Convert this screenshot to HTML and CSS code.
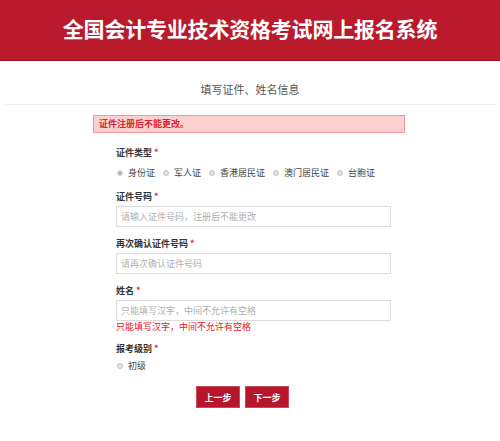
FILE: index.html
```html
<!DOCTYPE html>
<html lang="zh-CN">
<head>
<meta charset="utf-8">
<title>全国会计专业技术资格考试网上报名系统</title>
<link rel="stylesheet" href="styles.css">
</head>
<body>
<header class="header">
  <h1 class="title">全国会计专业技术资格考试网上报名系统</h1>
</header>
<div class="subtitle">填写证件、姓名信息</div>
<main class="form">
  <div class="alert">证件注册后不能更改。</div>
  <div class="fields">
    <div class="field first">
      <div class="label">证件类型 <span class="req">*</span></div>
      <div class="radios">
        <label class="radio-item"><span class="radio checked"></span>身份证</label>
        <label class="radio-item"><span class="radio"></span>军人证</label>
        <label class="radio-item"><span class="radio"></span>香港居民证</label>
        <label class="radio-item"><span class="radio"></span>澳门居民证</label>
        <label class="radio-item"><span class="radio"></span>台胞证</label>
      </div>
    </div>
    <div class="field">
      <div class="label">证件号码 <span class="req">*</span></div>
      <input class="input" type="text" placeholder="请输入证件号码，注册后不能更改">
    </div>
    <div class="field">
      <div class="label">再次确认证件号码 <span class="req">*</span></div>
      <input class="input" type="text" placeholder="请再次确认证件号码">
    </div>
    <div class="field">
      <div class="label">姓名 <span class="req">*</span></div>
      <input class="input" type="text" placeholder="只能填写汉字，中间不允许有空格">
      <div class="error">只能填写汉字，中间不允许有空格</div>
    </div>
    <div class="field">
      <div class="label">报考级别 <span class="req">*</span></div>
      <div class="radios level">
        <label class="radio-item"><span class="radio"></span>初级</label>
      </div>
    </div>
  </div>
  <div class="actions">
    <button class="btn" type="button">上一步</button>
    <button class="btn" type="button">下一步</button>
  </div>
</main>
</body>
</html>
```
FILE: styles.css
```css
* { box-sizing: border-box; }
html, body { margin: 0; padding: 0; background: #fff; }
body {
  font-family: "Noto Sans CJK SC", "Noto Sans", sans-serif;
  color: #333;
  width: 500px;
}
.header {
  height: 61px;
  background: #b91a2c;
  border-bottom: 1px solid #a3131f;
  display: flex;
  align-items: center;
  justify-content: center;
  padding-bottom: 5px;
}
.title {
  margin: 0;
  color: #fff;
  font-size: 21px;
  font-weight: 700;
  line-height: 24px;
  letter-spacing: -0.2px;
}
.subtitle {
  margin: 0 5px;
  padding: 21px 0 7px;
  font-size: 11px;
  line-height: 15px;
  color: #555;
  text-align: center;
  border-bottom: 1px solid #eeeeee;
}
.form {
  width: 312px;
  margin: 10px 0 0 93px;
}
.alert {
  height: 18px;
  background: #fcd0d0;
  border: 1px solid #ee9a9a;
  color: #d7262f;
  font-size: 9px;
  font-weight: 700;
  line-height: 16px;
  padding-left: 5px;
}
.fields {
  padding-left: 23px;
}
.field { margin-top: 10px; }
.field.first { margin-top: 13px; }
.label {
  font-size: 9px;
  font-weight: 700;
  line-height: 14px;
  color: #333;
}
.req { color: #e0242c; }
.radios {
  display: flex;
  gap: 8px;
  margin-top: 6px;
  margin-left: 1px;
  font-size: 9px;
  line-height: 14px;
  color: #444;
}
.radios.level { margin-top: 3px; }
.radio-item {
  display: flex;
  align-items: center;
}
.radio {
  width: 6px;
  height: 6px;
  border-radius: 50%;
  background: #e2e2e2;
  border: 1px solid #c4c4c4;
  margin-right: 5px;
  position: relative;
}
.radio.checked::after {
  content: "";
  position: absolute;
  left: 1px;
  top: 1px;
  width: 2px;
  height: 2px;
  border-radius: 50%;
  background: #777;
}
.input {
  display: block;
  width: 275px;
  height: 21px;
  margin: 2px 0 0;
  border: 1px solid #dcdcdc;
  padding: 0 4px;
  font-family: "Noto Sans CJK SC", "Noto Sans", sans-serif;
  font-size: 9px;
  color: #333;
  outline: none;
  background: #fff;
}
.input::placeholder { color: #b0b0b0; }
.error {
  color: #ec1219;
  font-size: 9px;
  line-height: 10px;
  margin-top: 1px;
}
.actions {
  display: flex;
  gap: 5px;
  padding-left: 103px;
  margin-top: 13px;
}
.btn {
  width: 44px;
  height: 22px;
  background: #b5162b;
  border: 1px solid #c94a57;
  color: #fff;
  font-family: "Noto Sans CJK SC", "Noto Sans", sans-serif;
  font-size: 9px;
  font-weight: 700;
  padding: 0;
}
```
